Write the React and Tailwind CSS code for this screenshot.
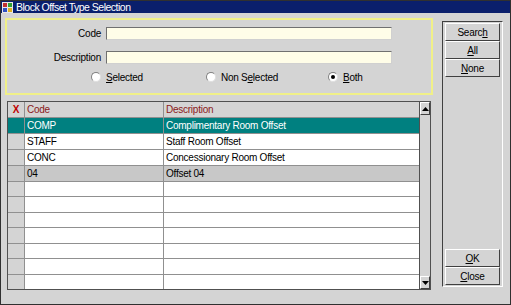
import React from "react";

const rows = [
  { code: "COMP", desc: "Complimentary Room Offset", kind: "sel" },
  { code: "STAFF", desc: "Staff Room Offset", kind: "" },
  { code: "CONC", desc: "Concessionary Room Offset", kind: "" },
  { code: "04", desc: "Offset 04", kind: "gray" },
  ...Array.from({ length: 7 }, () => ({ code: "", desc: "", kind: "" })),
];

function Radio({ checked, children }) {
  return (
    <div className="flex items-center gap-[5px]">
      <span className="w-[10px] h-[10px] rounded-full bg-white border border-t-[#808080] border-l-[#808080] border-r-[#e0e0e0] border-b-[#e0e0e0] flex items-center justify-center">
        {checked && <span className="w-[4px] h-[4px] rounded-full bg-black" />}
      </span>
      <span>{children}</span>
    </div>
  );
}

function Btn({ children }) {
  return (
    <div className="h-[18px] flex items-center justify-center bg-[#d4d4d4] border border-t-white border-l-white border-b-[#404040] border-r-[#404040]">
      {children}
    </div>
  );
}

export default function App() {
  return (
    <div
      className="w-[511px] h-[305px] bg-[#d4d4d4] border border-[#303030] flex flex-col text-[10px] tracking-[-0.25px] text-black"
      style={{ fontFamily: '"Liberation Sans", Arial, sans-serif' }}
    >
      {/* title bar */}
      <div className="h-[12px] bg-[#0a1f6c] flex items-center text-white text-[10.5px] tracking-[-0.5px] leading-none">
        <svg width="11" height="11" viewBox="0 0 11 11" className="ml-[1px] mr-[3px]">
          <rect x="0" y="0" width="11" height="11" fill="#e8e8e8" />
          <rect x="1" y="1" width="4" height="4" fill="#c03030" />
          <rect x="6" y="1" width="4" height="4" fill="#30a030" />
          <rect x="1" y="6" width="4" height="4" fill="#3050c0" />
          <rect x="6" y="6" width="4" height="4" fill="#e0b020" />
        </svg>
        <span>Block Offset Type Selection</span>
      </div>

      <div className="flex-1 flex pl-[4px] pt-[5px]">
        {/* left column */}
        <div className="w-[428px] flex flex-col">
          <div className="h-[77px] border-2 border-[#f0f088] flex flex-col pt-[6px]">
            <div className="flex items-center h-[14px]">
              <span className="w-[94px] text-right">Code</span>
              <div className="ml-[5px] w-[286px] h-[13px] bg-[#fffde8] border border-t-[#707070] border-l-[#707070] border-b-[#d0d0d0] border-r-[#d0d0d0]" />
            </div>
            <div className="flex items-center h-[14px] mt-[10px]">
              <span className="w-[94px] text-right">Description</span>
              <div className="ml-[5px] w-[286px] h-[13px] bg-[#fffde8] border border-t-[#707070] border-l-[#707070] border-b-[#d0d0d0] border-r-[#d0d0d0]" />
            </div>
            <div className="flex items-center mt-[7px] h-[12px]">
              <div className="ml-[84px] w-[115px]">
                <Radio>
                  <u>S</u>elected
                </Radio>
              </div>
              <div className="w-[122px]">
                <Radio>
                  Non S<u>e</u>lected
                </Radio>
              </div>
              <Radio checked>
                <u>B</u>oth
              </Radio>
            </div>
          </div>

          {/* grid */}
          <div className="mt-[6px] ml-[2px] w-[424px] h-[189px] flex border-l border-t border-[#505050]">
            <div className="flex-1 flex flex-col border-b border-[#505050]">
              <div className="flex-1 flex bg-[#d4d4d4] border-b border-[#909090]">
                <div className="w-[16px] flex items-center justify-center text-[#c00000] font-bold text-[10px]">X</div>
                <div className="w-[139px] border-l border-[#909090] flex items-center pl-[2px] text-[#8a1a1a]">Code</div>
                <div className="flex-1 border-l border-[#909090] flex items-center pl-[2px] text-[#8a1a1a]">Description</div>
              </div>
              {rows.map((r, i) => (
                <div
                  key={i}
                  className={
                    "flex-1 flex border-b border-[#909090] last:border-b-0 " +
                    (r.kind === "sel"
                      ? "bg-[#008080] text-white"
                      : r.kind === "gray"
                      ? "bg-[#c8c8c8]"
                      : "bg-white")
                  }
                >
                  <div className={"w-[16px] " + (r.kind === "sel" ? "bg-[#008080]" : r.kind === "gray" ? "bg-[#c8c8c8]" : "bg-[#d4d4d4]")} />
                  <div className="w-[139px] border-l border-[#909090] flex items-center pl-[2px]">{r.code}</div>
                  <div className="flex-1 border-l border-[#909090] flex items-center pl-[2px]">{r.desc}</div>
                </div>
              ))}
            </div>
            {/* scrollbar */}
            <div className="w-[12px] flex flex-col justify-between bg-[#d4d4d4] border-l border-r border-[#505050] border-b">
              <div className="h-[13px] border border-t-white border-l-white border-b-[#404040] border-r-[#404040] flex items-center justify-center">
                <svg width="7" height="4" viewBox="0 0 7 4"><path d="M0 4 L3.5 0 L7 4 Z" fill="#000" /></svg>
              </div>
              <div className="h-[13px] border border-t-white border-l-white border-b-[#404040] border-r-[#404040] flex items-center justify-center">
                <svg width="7" height="4" viewBox="0 0 7 4"><path d="M0 0 L3.5 4 L7 0 Z" fill="#000" /></svg>
              </div>
            </div>
          </div>
        </div>

        {/* right panel */}
        <div className="ml-[9px] mt-[3px] w-[61px] h-[266px] border border-t-[#404040] border-l-[#404040] border-b-white border-r-white flex flex-col justify-between px-[2px] py-[1px]">
          <div className="flex flex-col">
            <Btn>Searc<u>h</u></Btn>
            <Btn><u>A</u>ll</Btn>
            <Btn><u>N</u>one</Btn>
          </div>
          <div className="flex flex-col">
            <Btn><u>O</u>K</Btn>
            <Btn><u>C</u>lose</Btn>
          </div>
        </div>
      </div>
    </div>
  );
}
